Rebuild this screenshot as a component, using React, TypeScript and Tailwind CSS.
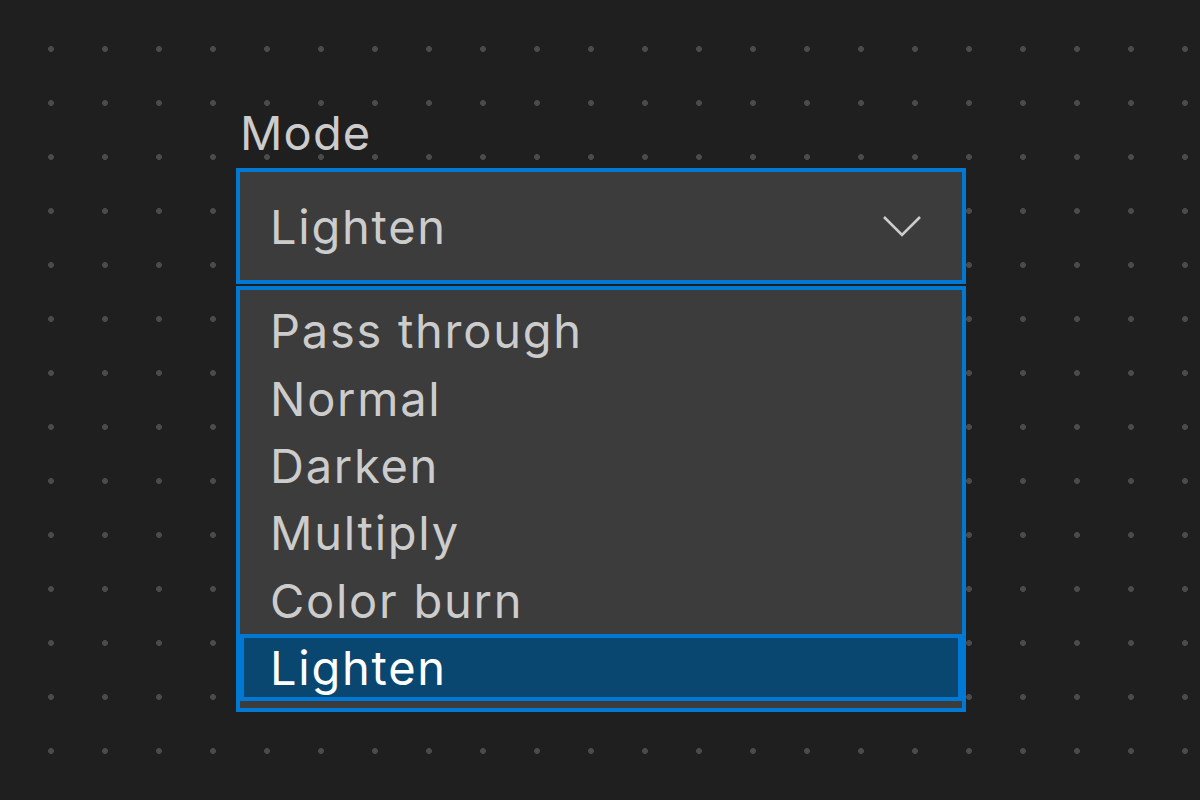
import { useState } from "react";

const MODES = ["Pass through", "Normal", "Darken", "Multiply", "Color burn", "Lighten"];

export default function App() {
  const [mode, setMode] = useState("Lighten");

  return (
    <div className="h-[800px] w-full overflow-hidden bg-[#1f1f1f] bg-[radial-gradient(circle,#4b4b4b_2.6px,transparent_3.2px)] bg-[length:54px_54px] bg-[position:24px_22px] pt-[109px] pl-[236px] font-['Inter',sans-serif]">
      <div className="w-[730px]">
        {/* LABEL */}
        <p className="pl-[4px] text-[47px] leading-[47px] tracking-[0.024em] text-[#cccccc] mb-[12px]">Mode</p>

        {/* SELECT */}
        <div className="flex h-[116px] items-center justify-between border-4 border-[#0078d4] bg-[#3c3c3c] pl-[30px] pr-[40px]">
          <span className="text-[47px] leading-none tracking-[0.037em] text-[#cccccc]">{mode}</span>
          <svg width="40" height="22" viewBox="0 0 40 22" fill="none">
            <path d="M2 2 L20 20 L38 2" stroke="#cccccc" strokeWidth="2.6" />
          </svg>
        </div>

        {/* LISTBOX */}
        <div className="mt-[2px] border-4 border-[#0078d4] bg-[#3c3c3c] py-[7px]">
          {MODES.map((m) =>
            m === mode ? (
              <div
                key={m}
                className="flex h-[67.4px] items-center border-4 border-[#0078d4] bg-[#094771] pl-[26px] text-[47px] leading-none tracking-[0.037em] text-white"
              >
                {m}
              </div>
            ) : (
              <div
                key={m}
                onClick={() => setMode(m)}
                className="flex h-[67.4px] items-center pl-[30px] text-[47px] leading-none tracking-[0.037em] text-[#cccccc]"
              >
                {m}
              </div>
            )
          )}
        </div>
      </div>
    </div>
  );
}
